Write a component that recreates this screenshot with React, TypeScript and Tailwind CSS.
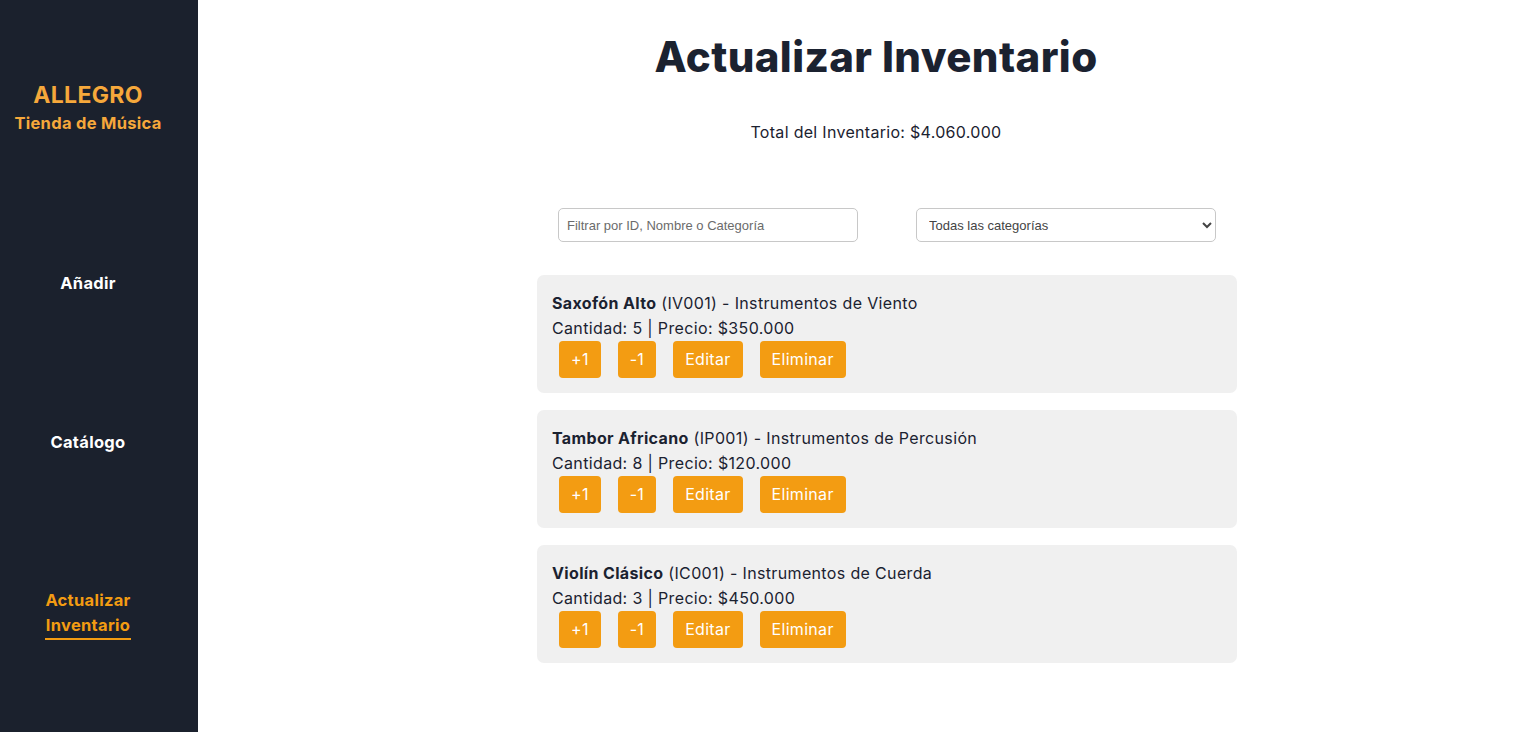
const items = [
  { name: "Saxofón Alto", id: "IV001", cat: "Instrumentos de Viento", qty: 5, price: "$350.000" },
  { name: "Tambor Africano", id: "IP001", cat: "Instrumentos de Percusión", qty: 8, price: "$120.000" },
  { name: "Violín Clásico", id: "IC001", cat: "Instrumentos de Cuerda", qty: 3, price: "$450.000" },
];

function Sidebar() {
  return (
    <aside className="w-[198px] shrink-0 bg-[#1b212d] min-h-screen pr-[22px] flex flex-col items-center font-bold tracking-[0.3px]">
      <div className="mt-[81px] flex flex-col items-center text-[#f6a83b]">
        <span className="text-[23px] leading-[28px]">ALLEGRO</span>
        <span className="text-[16.5px] leading-[22px] mt-[3px]">Tienda de Música</span>
      </div>
      <a className="mt-[138px] text-white text-[16.5px] leading-[22px]">Añadir</a>
      <a className="mt-[137px] text-white text-[16.5px] leading-[22px]">Catálogo</a>
      <a className="mt-[135px] text-[#f39c12] text-[16.5px] leading-[25px] text-center border-b-2 border-[#f39c12]">
        Actualizar
        <br />
        Inventario
      </a>
    </aside>
  );
}

function Btn({ label }: { label: string }) {
  return (
    <button className="h-[37px] px-[12px] pb-[2px] bg-[#f39c12] text-white text-[16px] tracking-[0.3px] rounded-[4px]">{label}</button>
  );
}

export default function App() {
  return (
    <div className="flex min-h-screen bg-white text-[#1b2230]" style={{ fontFamily: "Inter, 'Noto Sans', sans-serif" }}>
      <Sidebar />
      <main className="flex-1 pl-5 flex flex-col items-center">
        <h1 className="mt-[32px] text-[42px] leading-[50px] font-extrabold tracking-[0.4px]">Actualizar Inventario</h1>
        <p className="mt-[38px] text-[16px] leading-[24px] tracking-[0.3px]">Total del Inventario: $4.060.000</p>
        <div className="ml-[22px] w-[700px] flex flex-col">
          <div className="mt-[64px] flex justify-center gap-[58px]">
            <input
              placeholder="Filtrar por ID, Nombre o Categoría"
              className="w-[300px] h-[34px] border border-[#c8c8c8] rounded-[5px] px-[8px] text-[13px] placeholder:text-[#6b6b6b] outline-none"
              style={{ fontFamily: "'Liberation Sans', Arial, sans-serif" }}
            />
            <select
              className="w-[300px] h-[34px] border border-[#c8c8c8] rounded-[5px] px-[8px] text-[13px] text-[#444] bg-white"
              style={{ fontFamily: "'Liberation Sans', Arial, sans-serif" }}
            >
              <option>Todas las categorías</option>
            </select>
          </div>
          <div className="mt-[33px] flex flex-col gap-[17px]">
            {items.map((it) => (
              <div key={it.id} className="h-[118px] bg-[#f0f0f0] rounded-[7px] pl-[15px] pt-[16px] text-[16px] leading-[24px] tracking-[0.35px]">
                <p>
                  <span className="font-bold">{it.name}</span> ({it.id}) - {it.cat}
                </p>
                <p className="mt-[1px]">
                  Cantidad: {it.qty} | Precio: {it.price}
                </p>
                <div className="flex gap-[17px] ml-[7px] mt-[1px]">
                  <Btn label="+1" />
                  <Btn label="-1" />
                  <Btn label="Editar" />
                  <Btn label="Eliminar" />
                </div>
              </div>
            ))}
          </div>
        </div>
      </main>
    </div>
  );
}
